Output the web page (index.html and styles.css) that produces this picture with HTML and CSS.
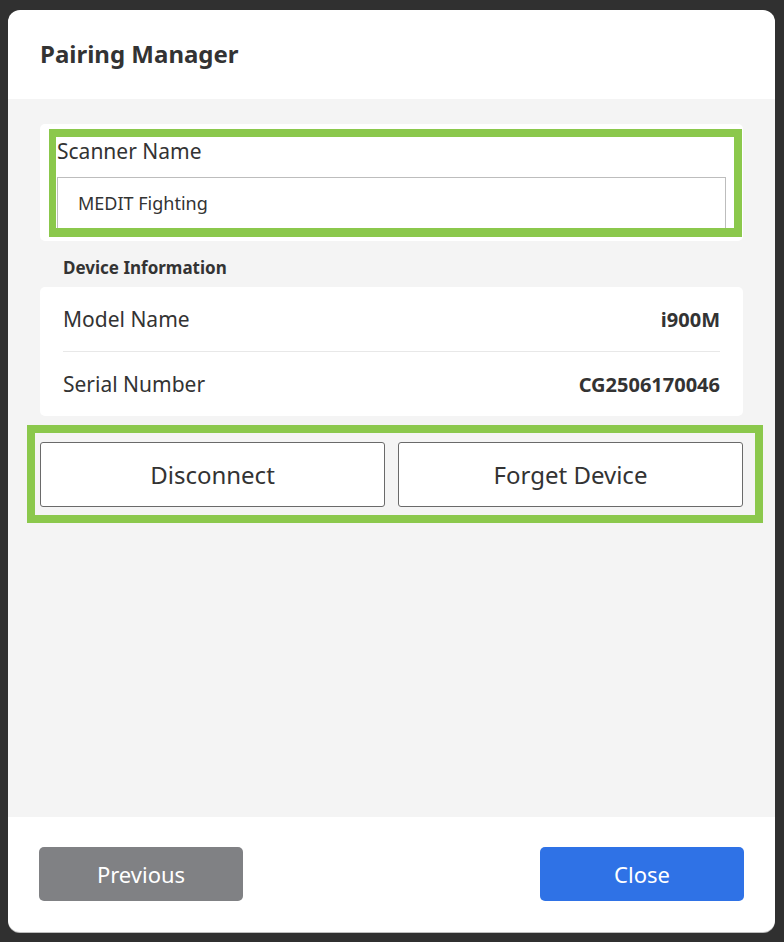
FILE: index.html
```html
<!DOCTYPE html>
<html lang="en">
<head>
    <meta charset="UTF-8">
    <meta name="viewport" content="width=device-width, initial-scale=1.0">
    <title>Pairing Manager</title>
    <link rel="stylesheet" href="styles.css">
</head>
<body>
    <div class="dialog">
        <div class="dialog-header">
            <h1>Pairing Manager</h1>
        </div>

        <div class="dialog-body">
            <div class="card name-card">
                <label for="scannerName">Scanner Name</label>
                <input type="text" id="scannerName" value="MEDIT Fighting">
                <div class="highlight name-highlight"></div>
            </div>

            <div class="section-title">Device Information</div>
            <div class="card info-card">
                <div class="info-row">
                    <span class="info-label">Model Name</span>
                    <span class="info-value">i900M</span>
                </div>
                <div class="info-row">
                    <span class="info-label">Serial Number</span>
                    <span class="info-value">CG2506170046</span>
                </div>
            </div>

            <div class="actions">
                <button type="button" class="outline-btn">Disconnect</button>
                <button type="button" class="outline-btn">Forget Device</button>
                <div class="highlight actions-highlight"></div>
            </div>
        </div>

        <div class="dialog-footer">
            <button type="button" class="btn btn-grey">Previous</button>
            <button type="button" class="btn btn-blue">Close</button>
        </div>
    </div>
</body>
</html>
```

FILE: styles.css
```css
body {
    margin: 0;
    padding: 10px 9px 10px 8px;
    background-color: #303030;
    font-family: "Noto Sans", "Open Sans", sans-serif;
    color: #333;
}
.dialog {
    width: 767px;
    height: 922px;
    display: flex;
    flex-direction: column;
    background: #fff;
    border-radius: 12px;
    overflow: hidden;
    box-shadow: 0 1px 0 #bdbdbd;
}
.dialog-header {
    height: 89px;
    padding: 28px 32px 0;
    box-sizing: border-box;
}
h1 {
    margin: 0;
    font-size: 24px;
    line-height: 32px;
    font-weight: 700;
    color: #333;
}
.dialog-body {
    flex: 1;
    padding: 25px 32px 0;
    background: #f4f4f4;
}
.card {
    background: #fff;
    border-radius: 5px;
}
.name-card {
    position: relative;
    padding: 13px 17px 12px 17px;
}
.name-card label {
    display: block;
    font-size: 21px;
    line-height: 28px;
    color: #333;
}
.name-card input {
    display: block;
    width: 100%;
    height: 52px;
    margin-top: 12px;
    padding: 0 20px;
    box-sizing: border-box;
    border: 1px solid #bdbdbd;
    border-radius: 0;
    font-family: inherit;
    font-size: 18px;
    color: #333;
    outline: none;
}
.highlight {
    position: absolute;
    border: 8px solid #8bc84c;
    pointer-events: none;
}
.name-highlight {
    left: 9px;
    right: 1px;
    top: 5px;
    bottom: 4px;
    border-width: 8px 8px 9px 7px;
}
.section-title {
    margin: 15px 0 7px;
    padding-left: 23px;
    font-size: 17px;
    line-height: 24px;
    font-weight: 700;
    color: #333;
}
.info-card {
    padding: 0 23px;
}
.info-row {
    height: 64px;
    display: flex;
    align-items: center;
    justify-content: space-between;
}
.info-row + .info-row {
    border-top: 1px solid #e8e8e8;
}
.info-label {
    font-size: 21px;
}
.info-value {
    font-size: 20px;
    font-weight: 700;
    color: #333;
}
.actions {
    position: relative;
    display: flex;
    gap: 13px;
    margin-top: 26px;
}
.outline-btn {
    flex: 1;
    height: 65px;
    background: #fff;
    border: 1.5px solid #6a6a6a;
    border-radius: 3px;
    font-family: inherit;
    font-size: 24px;
    color: #333;
}
.actions-highlight {
    left: -13px;
    right: -20px;
    top: -17px;
    bottom: -16px;
}
.dialog-footer {
    height: 115px;
    padding: 30px 31px 0;
    box-sizing: border-box;
    display: flex;
    justify-content: space-between;
}
.btn {
    width: 204px;
    height: 54px;
    border: none;
    border-radius: 5px;
    font-family: inherit;
    font-size: 22px;
    color: #fff;
}
.btn-grey {
    background: #808184;
}
.btn-blue {
    background: #2f72e6;
}
```
